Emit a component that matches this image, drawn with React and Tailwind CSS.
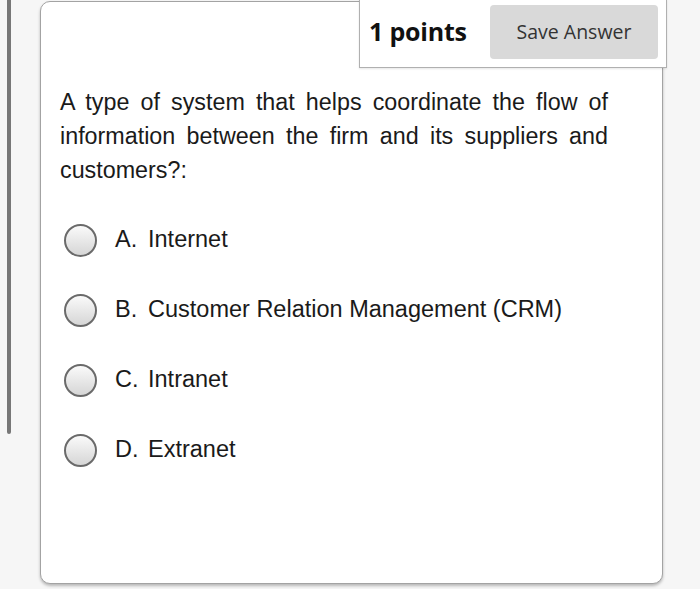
import React from 'react';

const options = [
  { key: 'A.', text: 'Internet' },
  { key: 'B.', text: 'Customer Relation Management (CRM)' },
  { key: 'C.', text: 'Intranet' },
  { key: 'D.', text: 'Extranet' },
];

function Radio() {
  return (
    <span className="block w-[33px] h-[33px] shrink-0 rounded-full border-2 border-[#6a6a6a] bg-gradient-to-b from-[#fafafa] to-[#d6d6d6]" />
  );
}

export default function App() {
  return (
    <div className="w-[700px] h-[589px] bg-[#f6f6f6] flex items-start overflow-hidden">
      {/* side scroll bar */}
      <div className="ml-[7px] w-[4px] h-[434px] bg-[#777777] rounded-b-sm shrink-0" />

      {/* question card */}
      <div className="relative ml-[29px] mt-[1px] w-[623px] h-[583px] bg-white border border-[#a3a3a3] rounded-[10px] shadow-[0_2px_3px_rgba(0,0,0,0.25)] shrink-0">
        <div className="absolute top-[-3px] right-[-5px] w-[308px] h-[69px] bg-white border border-[#b0b0b0] shadow-[0_1px_2px_rgba(0,0,0,0.1)] flex items-center pl-[9px] pr-[8px] font-['Open_Sans',sans-serif]">
          <span className="mt-[-4px] text-[25px] font-bold text-[#111] tracking-[-0.2px]">1 points</span>
          <button className="ml-auto mt-[-3px] w-[168px] h-[54px] bg-[#d9d9d9] rounded-[4px] text-[19.5px] text-[#333]">
            Save Answer
          </button>
        </div>

        <div className="pt-[83px] pl-[19px] pr-[54px] font-['Liberation_Sans',Arial,sans-serif] text-[#1a1a1a]">
          <p className="text-[23.3px] leading-[34px] text-justify">
            A type of system that helps coordinate the flow of information between the firm and its suppliers and customers?:
          </p>

          <div className="mt-[18px] flex flex-col">
            {options.map((o) => (
              <label key={o.key} className="h-[70px] flex items-center pl-[4px]">
                <Radio />
                <span className="ml-[18px] w-[33px] text-[23.5px]">{o.key}</span>
                <span className="text-[23.5px]">{o.text}</span>
              </label>
            ))}
          </div>
        </div>
      </div>
    </div>
  );
}
